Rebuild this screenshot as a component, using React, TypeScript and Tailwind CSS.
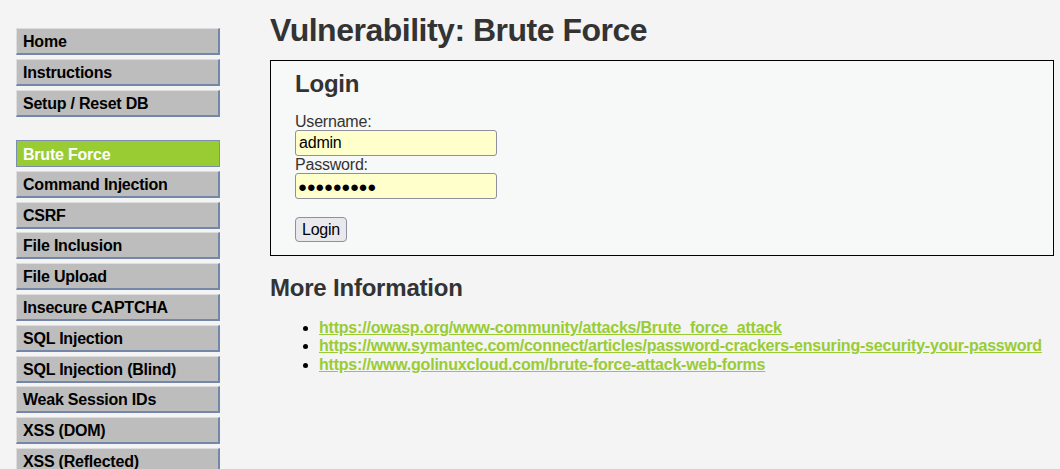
import React from "react";

const group1 = ["Home", "Instructions", "Setup / Reset DB"];
const group2 = [
  "Brute Force",
  "Command Injection",
  "CSRF",
  "File Inclusion",
  "File Upload",
  "Insecure CAPTCHA",
  "SQL Injection",
  "SQL Injection (Blind)",
  "Weak Session IDs",
  "XSS (DOM)",
  "XSS (Reflected)",
  "XSS (Stored)",
];

function Item({ label, active }: { label: string; active?: boolean }) {
  return (
    <li>
      <a
        className={
          active
            ? "block bg-[#99cc33] text-white border border-[#7b8db2] pl-[6px] pt-[4px] pb-[2px] leading-[19px] text-[16px] font-bold tracking-[-0.014em]"
            : "block bg-[#bdbdbd] text-black border-t border-l border-t-[#dddddd] border-l-[#dddddd] border-r-2 border-b-2 border-r-[#7587a9] border-b-[#7587a9] pl-[6px] pt-[4px] pb-[2px] leading-[18px] text-[16px] font-bold tracking-[-0.014em]"
        }
      >
        {label}
      </a>
    </li>
  );
}

export default function App() {
  const font = { fontFamily: '"Liberation Sans", Arial, sans-serif' };
  return (
    <div
      className="w-[1060px] h-[469px] overflow-hidden bg-[#f4f4f4] flex tracking-[-0.013em]"
      style={font}
    >
      <nav className="ml-[16px] mt-[28px] w-[204px] shrink-0">
        <ul className="flex flex-col gap-[3.8px]">
          {group1.map((l) => (
            <Item key={l} label={l} />
          ))}
        </ul>
        <ul className="flex flex-col gap-[3.8px] mt-[23.5px]">
          {group2.map((l, i) => (
            <Item key={l} label={l} active={i === 0} />
          ))}
        </ul>
      </nav>
      <main className="ml-[50px] w-[784px] text-[#333]">
        <h1 className="text-[32px] leading-[37px] font-bold mt-[12px] text-[#333] tracking-[-0.0155em]">
          Vulnerability: Brute Force
        </h1>
        <div className="mt-[11px] border border-black bg-[#f7f8f8] pl-[24px] pt-[9px] pb-[13px]">
          <h2 className="text-[24px] leading-[28px] font-bold text-[#333]">Login</h2>
          <div className="mt-[15px] text-[16px] leading-[17px] text-[#333]">Username:</div>
          <input
            type="text"
            readOnly
            defaultValue="admin"
            className="block w-[202px] h-[26px] bg-[#ffffcc] border border-[#8f8f9d] rounded-[3px] px-[3px] text-[16px] text-black outline-none"
            style={font}
          />
          <div className="text-[16px] leading-[17px] text-[#333]">Password:</div>
          <input
            type="text"
            readOnly
            defaultValue="●●●●●●●●●"
            className="block w-[202px] h-[26px] bg-[#ffffcc] border border-[#8f8f9d] rounded-[3px] px-[2px] text-[15px] tracking-[-0.4px] text-black outline-none"
            style={font}
          />
          <button
            className="mt-[18px] block h-[25px] w-[52px] bg-[#e9e9ed] border border-[#8f8f9d] rounded-[4px] text-[16px] leading-[20px] text-black"
            style={font}
          >
            Login
          </button>
        </div>
        <h2 className="mt-[18px] text-[24px] leading-[28px] font-bold text-[#333]">
          More Information
        </h2>
        <ul className="mt-[17px] list-disc pl-[49px] text-[16px] leading-[18.4px]">
          {[
            "https://owasp.org/www-community/attacks/Brute_force_attack",
            "https://www.symantec.com/connect/articles/password-crackers-ensuring-security-your-password",
            "https://www.golinuxcloud.com/brute-force-attack-web-forms",
          ].map((u) => (
            <li key={u} className="marker:text-black whitespace-nowrap">
              <a className="font-bold text-[#99cc33] underline">{u}</a>
            </li>
          ))}
        </ul>
      </main>
    </div>
  );
}
